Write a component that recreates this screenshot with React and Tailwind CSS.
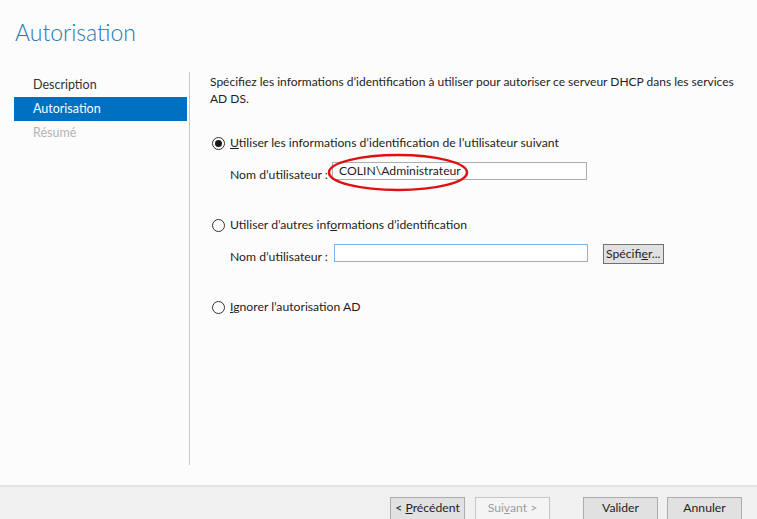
import React, { useState } from "react";

const font = { fontFamily: 'Lato, "Liberation Sans", sans-serif' };

const Radio = ({ checked, onClick, children }) => (
  <div className="flex items-center h-[17px] cursor-default" onClick={onClick}>
    <span className="w-[13px] h-[13px] rounded-full border border-[#333] bg-white flex items-center justify-center ml-[2px]">
      {checked && <span className="w-[7px] h-[7px] rounded-full bg-[#1a1a1a]" />}
    </span>
    <span className="ml-[5px] text-[12.2px] text-[#1e1e1e]">{children}</span>
  </div>
);

const Button = ({ children, disabled, className = "" }) => (
  <button
    disabled={disabled}
    className={
      "h-[23px] w-[75px] text-[12.2px] border " +
      (disabled
        ? "bg-[#f4f4f4] border-[#c6c6c6] text-[#9d9d9d] "
        : "bg-[#e1e1e1] border-[#adadad] text-[#1e1e1e] ") +
      className
    }
  >
    {children}
  </button>
);

const App = () => {
  const [mode, setMode] = useState(0);
  const steps = ["Description", "Autorisation", "Résumé"];

  return (
    <div className="w-[757px] h-[519px] bg-[#fcfcfc] flex flex-col overflow-hidden" style={font}>
      <div className="h-[72px] pl-[15px] pt-[16px]">
        <h1 className="text-[23px] leading-[32px] font-light text-[#1b79b3]">Autorisation</h1>
      </div>

      <div className="flex-1 flex pb-[20px]">
        <div className="w-[190px] border-r border-[#c9c9c9] pl-[14px] pr-[2px] pt-[1px]">
          {steps.map((s, i) => (
            <div
              key={s}
              className={
                "h-[24px] pl-[19px] flex items-center text-[12.5px] " +
                (i === 1 ? "bg-[#0070c0] text-white" : i === 2 ? "text-[#b4b4b4]" : "text-[#333]")
              }
            >
              {s}
            </div>
          ))}
        </div>

        <div className="flex-1 pl-[20px] pr-[8px] text-[12.2px] text-[#1e1e1e]">
          <p className="leading-[17px] text-[12px] pt-[1px]">
            Spécifiez les informations d’identification à utiliser pour autoriser ce serveur DHCP dans les services AD DS.
          </p>

          <div className="mt-[28px]">
            <Radio checked={mode === 0} onClick={() => setMode(0)}>
              <u>U</u>tiliser les informations d’identification de l’utilisateur suivant
            </Radio>
            <div className="flex items-start mt-[10px] ml-[20px]">
              <span className="w-[102px] whitespace-nowrap leading-[18px] mt-[4px]">Nom d’utilisateur :</span>
              <div className="relative">
                <div className="w-[255px] h-[18px] border border-[#abadb3] bg-white pl-[6px] flex items-center leading-none">
                  COLIN\Administrateur
                </div>
                <svg className="absolute left-[-5px] top-[-10px]" width="146" height="40" viewBox="0 0 146 40">
                  <ellipse cx="71" cy="20.5" rx="69" ry="17.5" fill="none" stroke="#e01010" strokeWidth="2.5" />
                </svg>
              </div>
            </div>
          </div>

          <div className="mt-[33px]">
            <Radio checked={mode === 1} onClick={() => setMode(1)}>
              Utiliser d’autres inf<u>o</u>rmations d’identification
            </Radio>
            <div className="flex items-start mt-[10px] ml-[20px]">
              <span className="w-[104px] whitespace-nowrap leading-[18px] mt-[4px]">Nom d’utilisateur :</span>
              <input className="w-[254px] h-[18px] border border-[#7eb4ea] bg-white outline-none px-[4px] text-[12px]" />
              <button className="ml-[15px] h-[20px] px-[2px] border border-[#707070] bg-[#e1e1e1] text-[12.2px] leading-none">
                Spécifi<u>e</u>r...
              </button>
            </div>
          </div>

          <div className="mt-[33px]">
            <Radio checked={mode === 2} onClick={() => setMode(2)}>
              <u>I</u>gnorer l’autorisation AD
            </Radio>
          </div>
        </div>
      </div>

      <div className="h-[34px] border-t-2 border-[#e3e3e3] bg-[#f0f0f0] flex pt-[10px] pr-[15px]">
        <div className="flex-1" />
        <Button>
          &lt; <u>P</u>récédent
        </Button>
        <Button disabled className="ml-[10px]">
          Sui<u>v</u>ant &gt;
        </Button>
        <Button className="ml-[33px]">Valider</Button>
        <Button className="ml-[9px]">Annuler</Button>
      </div>
    </div>
  );
};

export default App;
